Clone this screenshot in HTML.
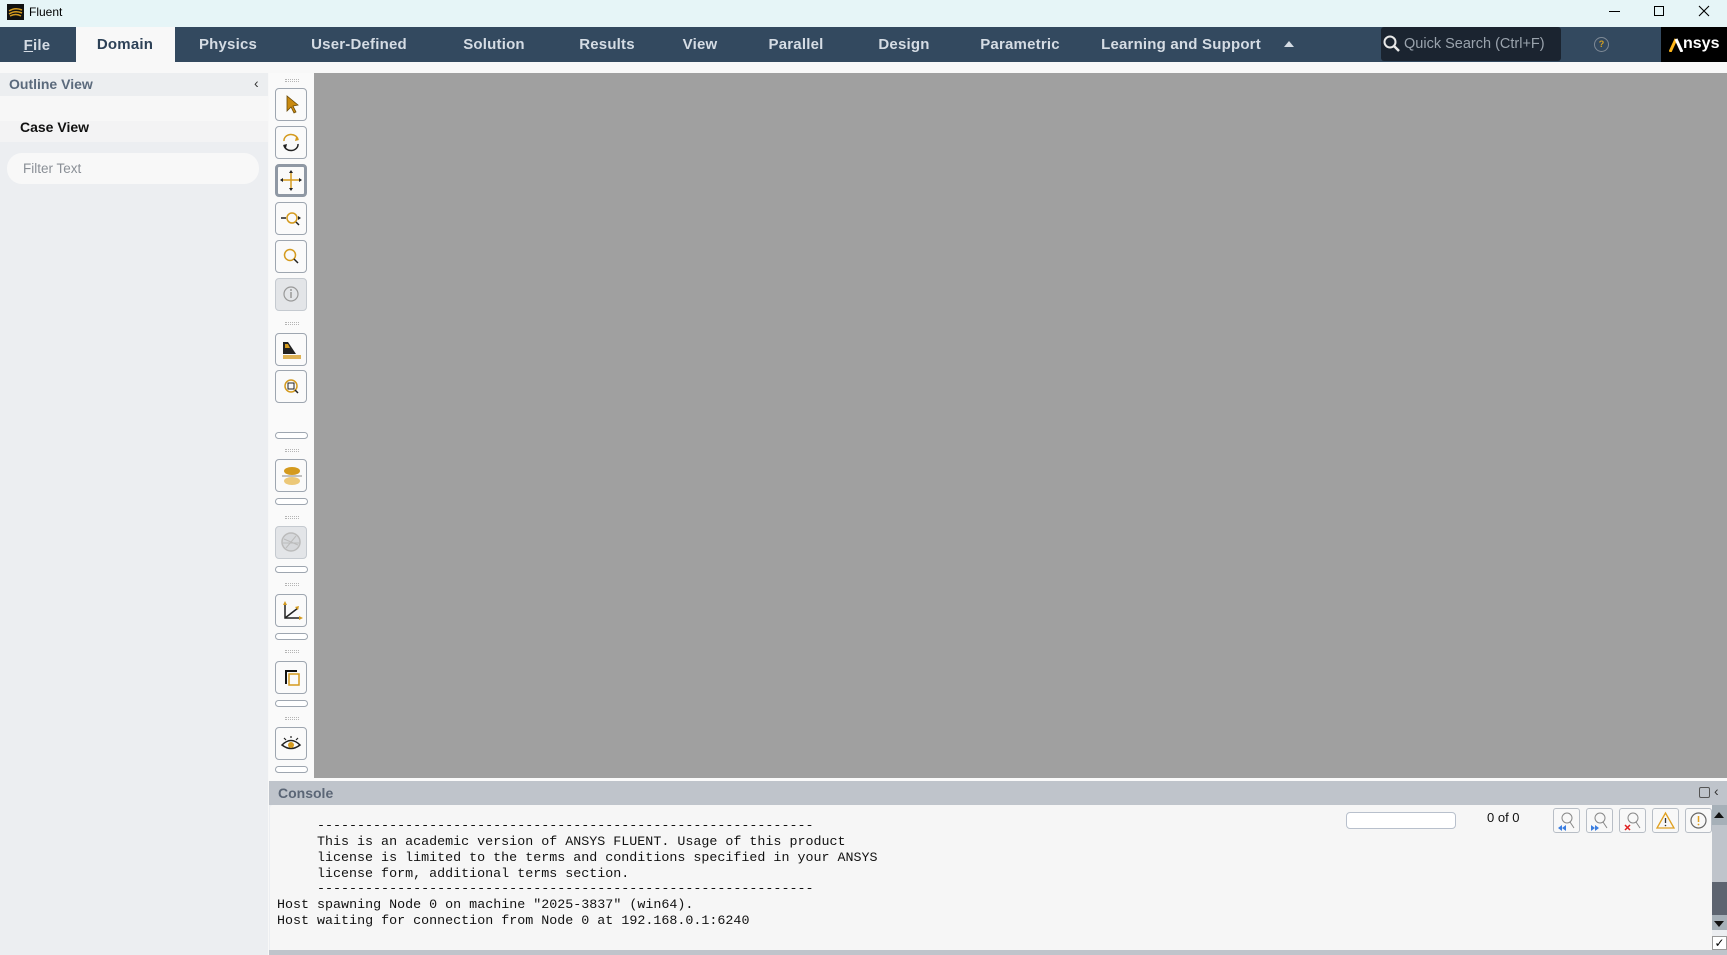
<!DOCTYPE html>
<html><head><meta charset="utf-8"><style>
*{margin:0;padding:0;box-sizing:border-box}
body{width:1727px;height:955px;overflow:hidden;background:#eceef1;font-family:"Liberation Sans",sans-serif;position:relative}
.a{position:absolute}
.menu span{position:absolute;top:9px;font-size:15px;color:#d5dce4;font-weight:bold;transform:translateX(-50%);white-space:nowrap;letter-spacing:0.2px}
.btn{position:absolute;left:275px;width:32px;height:33px;border:1px solid #9ea6b0;border-radius:4px;background:#fafafa}
.pill{position:absolute;left:275px;width:33px;height:7px;border:1px solid #9ea6b0;border-radius:4px;background:#fff}
.dots{position:absolute;left:285px;width:14px;height:3px;border-top:1px dotted #b5b5b5;border-bottom:1px dotted #b5b5b5}
.cl{position:absolute;font-family:"Liberation Mono",monospace;font-size:13.35px;color:#111;white-space:pre}
.cb{position:absolute;top:808px;width:27px;height:25px;border:1px solid #b8bec6;border-radius:3px;background:#f8f8f8}
</style></head><body>
<div class="a" style="left:0;top:0;width:1727px;height:27px;background:#e6f5f7"></div>
<div class="a" style="left:7px;top:4px;width:17px;height:16px;background:#111"></div>
<svg class="a" style="left:7px;top:4px" width="17" height="16"><path d="M2 7 Q8 3 15 6 M2 10 Q8 6 15 9 M3 12 Q9 9 14 12" stroke="#d49a1e" stroke-width="1.5" fill="none"/></svg>
<div class="a" style="left:29px;top:5px;font-size:12px;color:#000">Fluent</div>
<div class="a" style="left:1609px;top:11px;width:11px;height:1px;background:#000"></div>
<div class="a" style="left:1654px;top:6px;width:10px;height:10px;border:1px solid #000"></div>
<svg class="a" style="left:1698px;top:5px" width="12" height="12"><path d="M1 1L11 11M11 1L1 11" stroke="#000" stroke-width="1.1"/></svg>
<div class="a menu" style="left:0;top:27px;width:1727px;height:35px;background:#33495f">
<div class="a" style="left:76px;top:0;width:99px;height:35px;background:#f8f8f8"></div>
<span style="left:37px;top:10px"><u>F</u>ile</span>
<span style="left:125px;color:#2d4157">Domain</span>
<span style="left:228px">Physics</span>
<span style="left:359px">User-Defined</span>
<span style="left:494px">Solution</span>
<span style="left:607px">Results</span>
<span style="left:700px">View</span>
<span style="left:796px">Parallel</span>
<span style="left:904px">Design</span>
<span style="left:1020px">Parametric</span>
<span style="left:1181px">Learning and Support</span>
<div class="a" style="left:1284px;top:14px;width:0;height:0;border-left:5px solid transparent;border-right:5px solid transparent;border-bottom:6px solid #d5dce4"></div>
<div class="a" style="left:1381px;top:0;width:180px;height:34px;background:#1b2430;border-radius:3px"></div>
<svg class="a" style="left:1383px;top:8px" width="18" height="18"><circle cx="7" cy="7" r="5.5" stroke="#e8e8e8" stroke-width="2" fill="none"/><path d="M11 11L16 16" stroke="#e8e8e8" stroke-width="2.5"/></svg>
<div class="a" style="left:1404px;top:9px;font-size:14.5px;color:#9aa3ad">Quick Search (Ctrl+F)</div>
<div class="a" style="left:1594px;top:10px;width:15px;height:15px;border:1.5px solid #7f8a96;border-radius:50%;font-size:9px;color:#d4a020;text-align:center;line-height:12px;font-weight:bold">?</div>
<div class="a" style="left:1661px;top:0;width:66px;height:35px;background:#000"></div>
<svg class="a" style="left:1669px;top:11px" width="14" height="14"><path d="M1 14L7 1" stroke="#ffb71b" stroke-width="3"/><path d="M7 1L13 14" stroke="#fff" stroke-width="3"/></svg>
<div class="a" style="left:1683px;top:8px;font-size:16px;font-weight:bold;color:#fff">nsys</div>
</div>
<div class="a" style="left:0;top:62px;width:1727px;height:11px;background:#f8f8f8"></div>
<div class="a" style="left:0;top:73px;width:268px;height:23px;background:#eceef0"></div>
<div class="a" style="left:9px;top:76px;font-size:14px;font-weight:bold;color:#5b6a7c">Outline View</div>
<div class="a" style="left:254px;top:75px;font-size:14px;color:#333">‹</div>
<div class="a" style="left:0;top:96px;width:268px;height:25px;background:#f7f7f7"></div>
<div class="a" style="left:0;top:121px;width:268px;height:21px;background:#f3f3f4"></div>
<div class="a" style="left:20px;top:119px;font-size:14px;font-weight:bold;color:#111">Case View</div>
<div class="a" style="left:7px;top:153px;width:252px;height:31px;background:#f8f8f8;border-radius:15px"></div>
<div class="a" style="left:23px;top:161px;font-size:13.5px;color:#8a8f96">Filter Text</div>
<div class="a" style="left:268px;top:73px;width:1px;height:882px;background:#f8f8f8"></div>
<div class="a" style="left:269px;top:73px;width:45px;height:708px;background:#fafafa"></div>
<div class="dots" style="top:79px"></div>
<div class="btn" style="top:88px"><svg width="30" height="31"><path d="M11 7L11 22L15 18L18 24L20 23L17 17L22 16Z" fill="#c98a10" stroke="#6b4a08" stroke-width="0.8"/></svg></div>
<div class="btn" style="top:126px"><svg width="30" height="31"><path d="M8 14A7 6 0 0 1 22 13" stroke="#d49a1e" stroke-width="1.5" fill="none"/><path d="M22 17A7 6 0 0 1 8 18" stroke="#222" stroke-width="1.5" fill="none"/><path d="M20 10L23 13L19 14Z" fill="#d49a1e"/><path d="M10 21L7 18L11 17Z" fill="#222"/></svg></div>
<div class="btn" style="top:164px;border:3px solid #8f98a4"><svg width="26" height="27"><path d="M13 5V22M4 13H22" stroke="#d49a1e" stroke-width="1.5"/><path d="M13 3L11 6H15ZM13 24L11 21H15ZM2 13L5 11V15ZM24 13L21 11V15Z" fill="#222"/></svg></div>
<div class="btn" style="top:202px"><svg width="30" height="31"><circle cx="16" cy="15" r="5" stroke="#d49a1e" stroke-width="1.5" fill="none"/><path d="M5 15H10M20 19L23 22" stroke="#222" stroke-width="1.5"/><path d="M22 13L25 15L22 17Z" fill="#222"/></svg></div>
<div class="btn" style="top:240px"><svg width="30" height="31"><circle cx="14" cy="14" r="5.5" stroke="#d49a1e" stroke-width="1.5" fill="none"/><path d="M18 18L22 22" stroke="#222" stroke-width="1.5"/></svg></div>
<div class="btn" style="top:278px;background:#e3e5e8;border-color:#c5cad0"><svg width="30" height="31"><circle cx="15" cy="15" r="7" stroke="#999" stroke-width="1.2" fill="none"/><path d="M15 13V19" stroke="#999" stroke-width="1.5"/><circle cx="15" cy="11" r="1" fill="#999"/></svg></div>
<div class="dots" style="top:322px"></div>
<div class="btn" style="top:333px"><svg width="30" height="31"><path d="M7 8H12L20 20H7Z" fill="#222"/><path d="M9 10H12L14 14H9Z" fill="#d49a1e"/><path d="M7 22H25M7 24H25" stroke="#d49a1e" stroke-width="1.5"/></svg></div>
<div class="btn" style="top:370px"><svg width="30" height="31"><circle cx="15" cy="15" r="6" stroke="#d49a1e" stroke-width="1.5" fill="none"/><rect x="12" y="12" width="6" height="6" stroke="#222" fill="none"/><path d="M19 19L22 22" stroke="#222" stroke-width="1.5"/></svg></div>
<div class="pill" style="top:432px"></div>
<div class="dots" style="top:449px"></div>
<div class="btn" style="top:459px"><svg width="30" height="31"><ellipse cx="16" cy="11" rx="8" ry="4" fill="#d49a1e"/><path d="M6 16H26" stroke="#888"/><ellipse cx="16" cy="21" rx="8" ry="4" fill="#ecc878"/></svg></div>
<div class="pill" style="top:498px"></div>
<div class="dots" style="top:516px"></div>
<div class="btn" style="top:526px;background:#e3e5e8;border-color:#c5cad0"><svg width="30" height="31"><circle cx="15" cy="15" r="9" stroke="#bbb" stroke-width="1.5" fill="#d6d8db"/><path d="M8 12L22 18M10 21L20 9M7 16H23" stroke="#bbb"/></svg></div>
<div class="pill" style="top:566px"></div>
<div class="dots" style="top:583px"></div>
<div class="btn" style="top:594px"><svg width="30" height="31"><path d="M9 8V23H25" stroke="#222" stroke-width="1.5" fill="none"/><path d="M9 23L22 13" stroke="#222" stroke-width="1.5"/><path d="M9 6L7 10H11ZM27 23L23 21V25ZM23 11L19 12L22 15Z" fill="#d49a1e"/></svg></div>
<div class="pill" style="top:633px"></div>
<div class="dots" style="top:650px"></div>
<div class="btn" style="top:661px"><svg width="30" height="31"><path d="M9 8H21V10H11V22H9Z" fill="#111"/><rect x="13" y="12" width="10" height="11" stroke="#d49a1e" stroke-width="1.5" fill="none"/></svg></div>
<div class="pill" style="top:700px"></div>
<div class="dots" style="top:717px"></div>
<div class="btn" style="top:727px"><svg width="30" height="31"><path d="M6 17Q15 8 24 17Q15 24 6 17Z" stroke="#222" stroke-width="1.5" fill="none"/><circle cx="15" cy="17" r="3" fill="#d49a1e"/><path d="M8 10L10 12M15 8V10M22 10L20 12" stroke="#222" stroke-width="1.2"/></svg></div>
<div class="pill" style="top:766px"></div>
<div class="a" style="left:314px;top:73px;width:1413px;height:705px;background:#a0a0a0"></div>
<div class="a" style="left:269px;top:778px;width:1458px;height:3px;background:#fafafa"></div>
<div class="a" style="left:269px;top:781px;width:1458px;height:24px;background:#bfc4cb"></div>
<div class="a" style="left:278px;top:785px;font-size:14px;color:#5b6676;font-weight:bold">Console</div>
<div class="a" style="left:1699px;top:787px;width:11px;height:11px;border:1px solid #555;border-radius:2px"></div>
<div class="a" style="left:1714px;top:783px;font-size:14px;color:#333">‹</div>
<div class="a" style="left:270px;top:805px;width:1442px;height:145px;background:#f6f6f6;border-radius:3px 0 0 0"></div>
<div class="a" style="left:269px;top:950px;width:1458px;height:5px;background:#bfc4cb"></div>
<div class="cl" style="left:317px;top:819px">--------------------------------------------------------------</div>
<div class="cl" style="left:317px;top:835px">This is an academic version of ANSYS FLUENT. Usage of this product</div>
<div class="cl" style="left:317px;top:851px">license is limited to the terms and conditions specified in your ANSYS</div>
<div class="cl" style="left:317px;top:867px">license form, additional terms section.</div>
<div class="cl" style="left:317px;top:882px">--------------------------------------------------------------</div>
<div class="cl" style="left:277px;top:898px">Host spawning Node 0 on machine "2025-3837" (win64).</div>
<div class="cl" style="left:277px;top:914px">Host waiting for connection from Node 0 at 192.168.0.1:6240</div>
<div class="a" style="left:1346px;top:812px;width:110px;height:17px;border:1px solid #b8c0cc;border-radius:4px;background:#fff"></div>
<div class="a" style="left:1487px;top:810px;font-size:13px;color:#111">0 of 0</div>
<div class="cb" style="left:1553px"><svg width="25" height="23"><circle cx="13" cy="9" r="5" stroke="#888" fill="none"/><path d="M16 13L20 19" stroke="#888"/><path d="M4 19L8 16V22ZM8 19L12 16V22Z" fill="#3b7ee0"/></svg></div>
<div class="cb" style="left:1586px"><svg width="25" height="23"><circle cx="13" cy="9" r="5" stroke="#888" fill="none"/><path d="M16 13L20 19" stroke="#888"/><path d="M12 19L8 16V22ZM8 19L4 16V22Z" fill="#3b7ee0"/></svg></div>
<div class="cb" style="left:1619px"><svg width="25" height="23"><circle cx="13" cy="9" r="5" stroke="#888" fill="none"/><path d="M16 13L20 19" stroke="#888"/><path d="M5 16L10 21M10 16L5 21" stroke="#e02020" stroke-width="1.5"/></svg></div>
<div class="cb" style="left:1652px"><svg width="25" height="23"><path d="M12.5 4L21 19H4Z" stroke="#e0a020" stroke-width="1.3" fill="none"/><path d="M12.5 9V14" stroke="#333" stroke-width="1.3"/><circle cx="12.5" cy="16.5" r="0.8" fill="#333"/></svg></div>
<div class="cb" style="left:1685px"><svg width="25" height="23"><circle cx="12.5" cy="11.5" r="7.5" stroke="#666" stroke-width="1.2" fill="none"/><path d="M12.5 7V13" stroke="#e0a020" stroke-width="1.5"/><circle cx="12.5" cy="15.5" r="0.9" fill="#e0a020"/></svg></div>
<div class="a" style="left:1712px;top:805px;width:15px;height:125px;background:#bfc4cb"></div>
<div class="a" style="left:1712px;top:805px;width:15px;height:20px;background:#a6b0b8"></div>
<div class="a" style="left:1714px;top:812px;border-left:5px solid transparent;border-right:5px solid transparent;border-bottom:6px solid #111"></div>
<div class="a" style="left:1712px;top:882px;width:15px;height:33px;background:#5d6470"></div>
<div class="a" style="left:1712px;top:915px;width:15px;height:15px;background:#a6b0b8"></div>
<div class="a" style="left:1714px;top:921px;border-left:5px solid transparent;border-right:5px solid transparent;border-top:6px solid #111"></div>
<div class="a" style="left:1712px;top:936px;width:15px;height:14px;background:#fff;border:1px solid #999;font-size:12px;line-height:12px;text-align:center">✓</div>
</body></html>
